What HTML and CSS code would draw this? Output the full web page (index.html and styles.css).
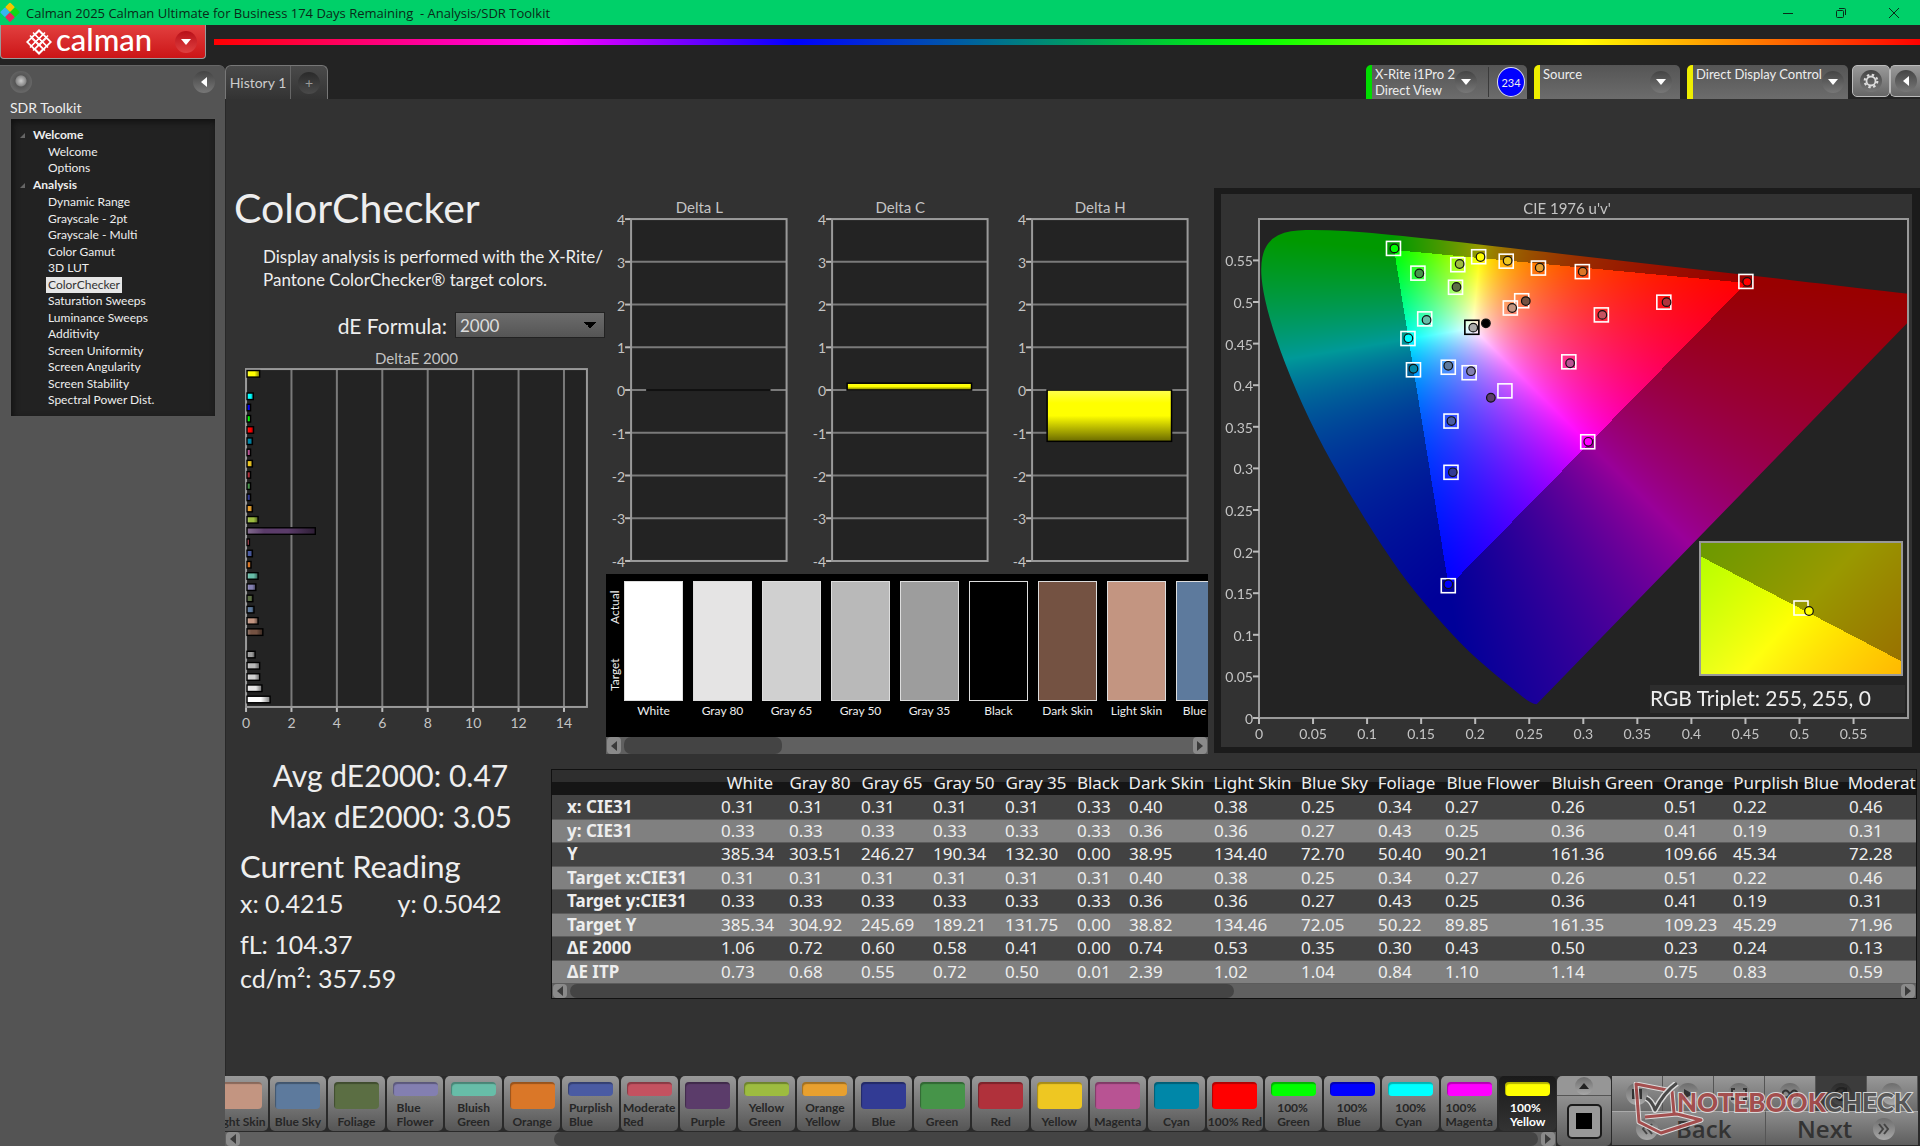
FILE: index.html
```html
<!DOCTYPE html>
<html lang="en">
<head>
    <meta charset="UTF-8">
    <meta name="viewport" content="width=device-width, initial-scale=1.0">
    <title>Calman 2025 - Analysis/SDR Toolkit</title>
    <link rel="stylesheet" href="styles.css">
</head>
<body>
    <header class="titlebar">
        <svg class="app-icon" viewBox="0 0 20 22" width="20" height="22">
            <rect x="6" y="2" width="7" height="7" rx="1" transform="rotate(45 10 6)" fill="#f5c400"/>
            <rect x="1" y="7" width="7" height="7" rx="1" transform="rotate(45 5 11)" fill="#37b6f0"/>
            <rect x="11" y="7" width="7" height="7" rx="1" transform="rotate(45 15 11)" fill="#0fd818"/>
            <rect x="6" y="12" width="7" height="7" rx="1" transform="rotate(45 10 16)" fill="#e8265c"/>
        </svg>
        <span class="window-title">Calman 2025 Calman Ultimate for Business 174 Days Remaining&nbsp; - Analysis/SDR Toolkit</span>
        <div class="window-buttons">
            <button title="Minimize"><svg viewBox="0 0 12 12" width="12" height="12"><path d="M1 6.500h10"/></svg></button>
            <button title="Restore"><svg viewBox="0 0 12 12" width="12" height="12"><rect x="1.500" y="3.500" width="7" height="7" rx="1"/><path d="M4 1.500h5.500a1 1 0 0 1 1 1V8"/></svg></button>
            <button title="Close"><svg viewBox="0 0 12 12" width="12" height="12"><path d="M1 1l10 10M11 1L1 11"/></svg></button>
        </div>
    </header>

    <div class="brandbar">
        <button class="brand" title="Calman menu">
            <svg viewBox="0 0 28 28" width="28" height="28">
                <path d="M14 1L27 14L14 27L1 14Z" fill="#fff"/>
                <g fill="#dc2226">
                    <path d="M14 4l3 3-3 3-3-3z"/>
                    <path d="M10 7.500l3 3-3 3-3-3z"/>
                    <path d="M18 7.500l3 3-3 3-3-3z"/>
                    <path d="M6.500 11l3 3-3 3-3-3z"/>
                    <path d="M14 11l3 3-3 3-3-3z"/>
                    <path d="M21.500 11l3 3-3 3-3-3z"/>
                    <path d="M10 14.500l3 3-3 3-3-3z"/>
                    <path d="M18 14.500l3 3-3 3-3-3z"/>
                    <path d="M14 18l3 3-3 3-3-3z"/>
                </g>
                <g fill="none" stroke="#fff" stroke-width="1.500"><path d="M8 4.500l15 15M5 7.500l15 15M20 4.500l-15 15M23 7.500l-15 15"/></g>
            </svg>
            <span class="wordmark">calman</span>
            <span class="round red"><svg viewBox="0 0 12 8" width="12" height="8"><path d="M1 1h10L6 7z" fill="#fff"/></svg></span>
        </button>
        <div class="rainbow"></div>
    </div>

    <div class="shell">
        <aside class="sidebar">
            <div class="sidebar-top">
                <span class="round knob"></span>
                <button class="round" title="Collapse"><svg viewBox="0 0 8 12" width="8" height="12"><path d="M7 1v10L1 6z" fill="#fff"/></svg></button>
            </div>
            <h2>SDR Toolkit</h2>
            <nav class="tree">
                <h3>Welcome</h3>
                <ul>
                    <li><a href="#">Welcome</a></li>
                    <li><a href="#">Options</a></li>
                </ul>
                <h3>Analysis</h3>
                <ul class="analysis">
                    <li><a href="#">Dynamic Range</a></li>
                    <li><a href="#">Grayscale - 2pt</a></li>
                    <li><a href="#">Grayscale - Multi</a></li>
                    <li><a href="#">Color Gamut</a></li>
                    <li><a href="#">3D LUT</a></li>
                    <li><a href="#" class="current">ColorChecker</a></li>
                    <li><a href="#">Saturation Sweeps</a></li>
                    <li><a href="#">Luminance Sweeps</a></li>
                    <li><a href="#">Additivity</a></li>
                    <li><a href="#">Screen Uniformity</a></li>
                    <li><a href="#">Screen Angularity</a></li>
                    <li><a href="#">Screen Stability</a></li>
                    <li><a href="#">Spectral Power Dist.</a></li>
                </ul>
            </nav>
        </aside>

        <main class="main">
            <div class="toolbar">
                <div class="tabs">
                    <button class="tab">History 1</button>
                    <button class="tab add" title="Add history"><span class="round dark">+</span></button>
                </div>
                <div class="devices">
                    <div class="device meter">
                        <span class="device-name">X-Rite i1Pro 2<br>Direct View</span>
                        <button class="round" title="Meter"><svg viewBox="0 0 12 8" width="12" height="8"><path d="M1 1h10L6 7z" fill="#fff"/></svg></button>
                        <span class="divider"></span>
                        <span class="count">234</span>
                    </div>
                    <div class="device source">
                        <span class="device-name">Source</span>
                        <button class="round" title="Source"><svg viewBox="0 0 12 8" width="12" height="8"><path d="M1 1h10L6 7z" fill="#fff"/></svg></button>
                    </div>
                    <div class="device display">
                        <span class="device-name">Direct Display Control</span>
                        <button class="round" title="Display"><svg viewBox="0 0 12 8" width="12" height="8"><path d="M1 1h10L6 7z" fill="#fff"/></svg></button>
                    </div>
                    <button class="square" title="Settings"><span class="round">
                        <svg viewBox="0 0 20 20" width="18" height="18" fill="none" stroke="#ddd"><circle cx="10" cy="10" r="5" stroke-width="2"/><circle cx="10" cy="10" r="7" stroke-width="2.400" stroke-dasharray="2.700 2.800"/></svg>
                    </span></button>
                    <button class="square last" title="Hide"><span class="round"><svg viewBox="0 0 8 12" width="8" height="12"><path d="M7 1v10L1 6z" fill="#fff"/></svg></span></button>
                </div>
            </div>

            <div class="workspace">
                <div class="upper">
                    <section class="intro">
                        <h1>ColorChecker</h1>
                        <p>Display analysis is performed with the X-Rite/<br>Pantone ColorChecker® target colors.</p>
                        <div class="formula">
                            <label for="formula">dE Formula:</label>
                            <select id="formula"><option>2000</option></select>
                        </div>
                        <svg id="deltaE" viewBox="0 0 371 385"></svg>
                    </section>

                    <section class="deltas">
                        <div class="delta-charts">
                            <svg class="delta" viewBox="0 0 200 374" data-title="Delta L" data-value="0"></svg>
                            <svg class="delta" viewBox="0 0 200 374" data-title="Delta C" data-value="0.16"></svg>
                            <svg class="delta" viewBox="0 0 200 374" data-title="Delta H" data-value="-1.2"></svg>
                        </div>
                        <div class="compare">
                            <div class="compare-side"><span>Target</span><span>Actual</span></div>
                            <div id="compare" class="compare-list"></div>
                        </div>
                        <div class="scrollbar tall">
                            <button title="Scroll left"><svg viewBox="0 0 6 10" width="6" height="10"><path d="M6 0v10L0 5z"/></svg></button>
                            <div class="track"><div class="thumb first"></div></div>
                            <button title="Scroll right"><svg viewBox="0 0 6 10" width="6" height="10"><path d="M0 0v10l6-5z"/></svg></button>
                        </div>
                    </section>

                    <section class="cie">
                        <canvas id="cieFill" width="691" height="553"></canvas>
                        <svg id="cie" viewBox="0 0 691 553"></svg>
                    </section>
                </div>

                <div class="lower">
                    <section class="stats">
                        <p class="big">Avg dE2000: 0.47</p>
                        <p class="big">Max dE2000: 3.05</p>
                        <h2>Current Reading</h2>
                        <p class="pair"><span>x: 0.4215</span><span>y: 0.5042</span></p>
                        <p>fL: 104.37</p>
                        <p>cd/m²: 357.59</p>
                    </section>
                    <section class="results">
                        <div class="table-wrap"><table id="results"></table></div>
                        <div class="scrollbar">
                            <button title="Scroll left"><svg viewBox="0 0 6 10" width="6" height="10"><path d="M6 0v10L0 5z"/></svg></button>
                            <div class="track"><div class="thumb half"></div></div>
                            <button title="Scroll right"><svg viewBox="0 0 6 10" width="6" height="10"><path d="M0 0v10l6-5z"/></svg></button>
                        </div>
                    </section>
                </div>
            </div>

            <footer class="bottombar">
                <div class="patterns">
                    <div id="patches" class="patches"></div>
                    <div class="scrollbar">
                        <button title="Scroll left"><svg viewBox="0 0 6 10" width="6" height="10"><path d="M6 0v10L0 5z"/></svg></button>
                        <div class="track end"><div class="thumb rest"></div></div>
                        <button title="Scroll right"><svg viewBox="0 0 6 10" width="6" height="10"><path d="M0 0v10l6-5z"/></svg></button>
                    </div>
                </div>
                <div class="window-pick">
                    <button class="up" title="Up"><span class="round grey"><svg viewBox="0 0 10 6" width="10" height="6"><path d="M0 6L5 0l5 6z" fill="#222"/></svg></span></button>
                    <button class="stop" title="Pattern window"><span></span></button>
                </div>
                <div class="transport">
                    <div class="steps">
                        <button title="Stop"><span class="round grey"><svg viewBox="0 0 12 12" width="12" height="12"><path d="M1 1h10v10H1z" fill="#333"/></svg></span></button>
                        <button title="Play"><span class="round grey"><svg viewBox="0 0 12 12" width="12" height="12"><path d="M2 1l9 5-9 5z" fill="#333"/></svg></span></button>
                        <button title="Read range"><span class="round grey"><svg viewBox="0 0 16 12" width="16" height="12"><path d="M4 1H1v10h3M12 1h3v10h-3M5 6h1M8 6h1M11 6h0.500" fill="none" stroke="#333" stroke-width="2"/></svg></span></button>
                        <button title="Continuous"><span class="round grey"><svg viewBox="0 0 16 10" width="16" height="10"><path d="M8 5C6 2 5 1.500 4 1.500a3.500 3.500 0 0 0 0 7C5 8.500 6 8 8 5s3-3.500 4-3.500a3.500 3.500 0 0 1 0 7C11 8.500 10 8 8 5z" fill="none" stroke="#333" stroke-width="2"/></svg></span></button>
                        <button class="pressed" title="Refresh"><span class="round dark"><svg viewBox="0 0 14 14" width="14" height="14"><path d="M12 3A6 6 0 1 0 12 11" fill="none" stroke="#222" stroke-width="2.500"/><path d="M13 0v6H7z" fill="#222"/></svg></span></button>
                        <button title="Level"><span class="round grey"><svg viewBox="0 0 12 12" width="12" height="12"><path d="M2 6h8" stroke="#555" stroke-width="2"/></svg></span></button>
                    </div>
                    <div class="nav-buttons">
                        <button class="back"><span class="round grey"><svg viewBox="0 0 12 12" width="12" height="12"><path d="M6 1L2 6l4 5M11 1L7 6l4 5" fill="none" stroke="#444" stroke-width="2"/></svg></span>Back</button>
                        <button class="next">Next<span class="round grey"><svg viewBox="0 0 12 12" width="12" height="12"><path d="M1 1l4 5-4 5M6 1l4 5-4 5" fill="none" stroke="#444" stroke-width="2"/></svg></span></button>
                    </div>
                    <svg class="watermark" viewBox="0 0 288 54">
                        <g fill="none" stroke-linejoin="round">
                            <path d="M40 9L4 2l3 38 22 11 40-13-24-6-32 3M40 9l2 22" stroke="#e6e6e6" stroke-width="5"/>
                            <path d="M40 9L4 2l3 38 22 11 40-13-24-6-32 3M40 9l2 22" stroke="#a84a4a" stroke-width="3"/>
                            <path d="M14 16c5 2 7 6 9 12 6-12 12-20 22-27" stroke="#e6e6e6" stroke-width="6"/>
                            <path d="M14 16c5 2 7 6 9 12 6-12 12-20 22-27" stroke="#444" stroke-width="3"/>
                        </g>
                        <text x="45" y="30"><tspan class="wm-red">NOTEBOOK</tspan><tspan class="wm-dark">CHECK</tspan></text>
                    </svg>
                </div>
            </footer>
        </main>
    </div>

    <script src="script.js"></script>
</body>
</html>
```
FILE: styles.css
```css
* {
    box-sizing: border-box;
    margin: 0;
    padding: 0;
}

body {
    display: flex;
    flex-direction: column;
    height: 100vh;
    overflow: hidden;
    background: #232323;
    color: #eee;
    font-family: Lato, "Open Sans", sans-serif;
    font-size: 13px;
}

button {
    border: 0;
    background: none;
    color: inherit;
    font: inherit;
    cursor: pointer;
}

svg {
    display: block;
}

ul {
    list-style: none;
}

/* Title bar */
.titlebar {
    display: flex;
    align-items: center;
    flex: none;
    height: 25px;
    background: #00d069;
    color: #0a2a18;
    font-family: "Open Sans", sans-serif;
    font-size: 13px;
}

.app-icon {
    margin-right: 6px;
}

.window-buttons {
    display: flex;
    margin-left: auto;
}

.window-buttons button {
    display: flex;
    align-items: center;
    justify-content: center;
    width: 53px;
    height: 25px;
}

.window-buttons svg {
    fill: none;
    stroke: #0a2a18;
}

/* Logo and colour line */
.brandbar {
    display: flex;
    flex: none;
    height: 40px;
    gap: 8px;
}

.brand {
    display: flex;
    align-items: center;
    width: 206px;
    height: 34px;
    padding-left: 24px;
    border: 1px solid #999;
    border-top: 0;
    border-radius: 0 0 4px 4px;
    background: linear-gradient(#e2403f, #cc1517);
    color: #fff;
}

.wordmark {
    flex: 1;
    height: 34px;
    padding-left: 3px;
    font-size: 31px;
    font-weight: 500;
    line-height: 28px;
    text-align: left;
}

.rainbow {
    flex: 1;
    height: 6px;
    margin-top: 14px;
    background: linear-gradient(90deg, #f00, #f0f 20%, #00f 34%, #0f0 61%, #ff0 80%, #f00);
}

.round {
    display: flex;
    align-items: center;
    justify-content: center;
    flex: none;
    width: 22px;
    height: 22px;
    border-radius: 50%;
    background: linear-gradient(#444, #777);
}

.round.red {
    margin-right: 8px;
    background: linear-gradient(#b80f18, #e04040);
}

.round.dark {
    background: linear-gradient(#2a2a2a, #4a4a4a);
    color: #999;
}

.round.grey {
    background: linear-gradient(#6d6d6d, #a8a8a8);
}

.round.knob {
    background: radial-gradient(circle at 50% 45%, #ccc 0, #888 5px, #555 6px, #666 11px);
}

.shell {
    display: flex;
    flex: 1;
    min-height: 0;
}

/* Sidebar */
.sidebar {
    flex: none;
    width: 225px;
    padding: 5px 10px;
    border-top: 1px solid #666;
    border-radius: 0 6px 0 0;
    background: #545454;
}

.sidebar-top {
    display: flex;
    justify-content: space-between;
}

.sidebar h2 {
    padding-top: 6px;
    font-size: 14px;
    font-weight: 400;
    line-height: 18px;
}

.tree {
    width: 206px;
    margin-top: 1px;
    padding: 7px 10px 8px 37px;
    border: 1px solid #555;
    background: #222;
    box-shadow: inset 2px 3px 6px #111;
    font-size: 12px;
}

.tree h3 {
    position: relative;
    margin-left: -15px;
    font-size: 12px;
    line-height: 18px;
}

.tree h3::before {
    position: absolute;
    left: -13px;
    top: 7px;
    border-left: 5px solid transparent;
    border-bottom: 5px solid #666;
    content: "";
}

.tree li {
    line-height: 16px;
}

.tree a {
    padding: 0 2px;
    margin-left: -2px;
    color: inherit;
    text-decoration: none;
}

.tree .analysis {
    display: grid;
    align-content: space-between;
    min-height: 214px;
}

.tree .current {
    display: inline-block;
    background: #e6e6e6;
    color: #333;
}

/* Tabs and devices */
.main {
    display: flex;
    flex: 1;
    flex-direction: column;
    min-width: 0;
}

.toolbar {
    display: flex;
    justify-content: space-between;
    flex: none;
    height: 34px;
}

.tabs {
    display: flex;
    border: 1px solid #777;
    border-bottom: 0;
    border-radius: 6px 6px 0 0;
    background: linear-gradient(#4a4a4a, #333);
}

.tab {
    width: 64px;
    color: #ccc;
    font-size: 14px;
}

.tab.add {
    display: flex;
    align-items: center;
    justify-content: center;
    width: 37px;
    border-left: 1px solid #666;
}

.devices {
    display: flex;
    gap: 7px;
}

.device {
    display: flex;
    align-items: center;
    height: 34px;
    padding-right: 8px;
    border-left: 6px solid #ee0;
    border-radius: 5px 5px 0 0;
    background: linear-gradient(#555, #6c6c6c);
}

.device-name {
    flex: 1;
    align-self: flex-start;
    padding: 1px 0 0 3px;
    line-height: 16px;
    white-space: nowrap;
}

.meter {
    width: 161px;
    padding-right: 2px;
    border-color: #0d0;
}

.source {
    width: 146px;
}

.display {
    width: 161px;
}

.divider {
    width: 1px;
    height: 30px;
    margin: 0 8px 0 11px;
    background: #3a3a3a;
}

.count {
    display: flex;
    align-items: center;
    justify-content: center;
    width: 30px;
    height: 30px;
    border: 1px solid #dde;
    border-radius: 50%;
    background: #00f;
    font-size: 11px;
}

.square {
    display: flex;
    align-items: center;
    justify-content: center;
    width: 38px;
    height: 32px;
    margin-left: -3px;
    border: 1px solid #bbb;
    border-radius: 5px;
    background: linear-gradient(#999, #666);
}

.square.last {
    width: 30px;
    margin-left: -7px;
    border-right: 0;
    border-radius: 5px 0 0 5px;
}

/* Workspace */
.workspace {
    flex: 1;
    min-height: 0;
    padding: 89px 0 0 8px;
    border-left: 1px solid #282828;
    background: #323232;
}

.upper {
    display: grid;
    grid-template-columns: 372fr 608fr 706fr;
    align-items: start;
}

.intro h1 {
    margin-top: -2px;
    font-size: 41px;
    font-weight: 400;
    line-height: 44px;
}

.intro p {
    padding: 15px 0 0 29px;
    font-size: 17px;
    line-height: 23px;
    white-space: nowrap;
}

.formula {
    display: flex;
    align-items: center;
    justify-content: flex-end;
    gap: 8px;
    padding: 21px 1px 9px 0;
    font-size: 21px;
}

/* the arrow is made of two half squares */
.formula select {
    width: 150px;
    height: 26px;
    padding: 0 4px;
    border: 1px solid #222;
    appearance: none;
    background:
        linear-gradient(45deg, transparent 50%, #000 50%) right 14px center / 6px 6px no-repeat,
        linear-gradient(-45deg, transparent 50%, #000 50%) right 8px center / 6px 6px no-repeat,
        linear-gradient(#6c6c6c, #555);
    color: #ddd;
    font: 17px Lato, sans-serif;
}

.deltas {
    min-width: 0;
    padding: 11px 6px 0 0;
}

.delta-charts {
    display: grid;
    grid-template-columns: repeat(3, 1fr);
}

.compare {
    display: flex;
    height: 163px;
    padding-top: 7px;
    overflow: hidden;
    background: #000;
}

.compare-side {
    display: flex;
    justify-content: center;
    flex: none;
    gap: 34px;
    width: 18px;
    height: 120px;
    font-size: 12px;
    line-height: 18px;
    writing-mode: vertical-rl;
    transform: rotate(180deg);
}

.compare-list {
    display: flex;
    gap: 10px;
}

.compare-item {
    flex: none;
    width: 59px;
    font-size: 12px;
    line-height: 20px;
    text-align: center;
    white-space: nowrap;
}

.compare-color {
    height: 120px;
    border: 1px solid #ddd;
}

/* Scrollbars */
.scrollbar {
    display: flex;
    align-items: center;
    height: 14px;
    padding: 0 1px;
    background: #606060;
}

.scrollbar.tall {
    height: 17px;
}

.scrollbar button {
    display: flex;
    align-items: center;
    justify-content: center;
    width: 14px;
    height: 100%;
    border-radius: 4px;
    background: #8a8a8a;
}

.scrollbar path {
    fill: #3a3a3a;
}

.track {
    flex: 1;
    height: 100%;
    margin: 0 3px;
}

.track.end {
    display: flex;
    justify-content: flex-end;
}

.thumb {
    height: 100%;
    border-radius: 7px;
    background: #444;
}

.thumb.first {
    width: 28%;
}

.thumb.half {
    width: 50%;
}

.thumb.rest {
    width: 76%;
}

/* Chromaticity diagram */
.cie {
    display: grid;
    border: 6px solid #1b1b1b;
    border-left-width: 7px;
    border-right-width: 8px;
}

.cie > * {
    grid-area: 1 / 1;
    width: 100%;
}

.label {
    fill: #c4c4c4;
    font-size: 14px;
}

.caption {
    fill: #c4c4c4;
    font-size: 15px;
    text-anchor: middle;
}

.label.mid {
    text-anchor: middle;
}

.label.end {
    text-anchor: end;
}

.plot {
    fill: #232323;
}

.frame {
    fill: none;
    stroke: #999;
    stroke-width: 2;
}

.grid-line {
    stroke: #7a7a7a;
    stroke-width: 2;
}

.tick {
    stroke: #bbb;
    stroke-width: 2;
}

.triplet {
    fill: #eee;
    font-size: 21px;
}

/* Readings */
.lower {
    display: grid;
    grid-template-columns: 317fr 1369fr;
    margin-top: 15px;
}

.stats {
    margin-top: -14px;
    padding-left: 6px;
    font-size: 25px;
    line-height: 34px;
}

.stats .big {
    margin-left: -6px;
    padding-right: 4px;
    font-size: 30px;
    line-height: 41px;
    text-align: center;
}

.stats h2 {
    margin-top: 10px;
    font-size: 31px;
    font-weight: 400;
    line-height: 38px;
}

.stats .pair {
    display: flex;
    gap: 54px;
    margin: 1px 0 7px;
}

.results {
    min-width: 0;
    margin-right: 3px;
    border: 1px solid #111;
}

.table-wrap {
    overflow: hidden;
}

#results {
    width: 1412px;
    border-collapse: collapse;
    table-layout: fixed;
    font-family: "Noto Sans", "Open Sans", sans-serif;
    font-size: 17px;
}

#results tr {
    height: 24px;
}

#results thead tr {
    height: 25px;
    background: linear-gradient(#2e2e2e 50%, #151515 50%);
}

#results th,
#results td {
    overflow: hidden;
    padding: 0 0 0 5px;
    line-height: 22px;
    text-align: left;
    white-space: nowrap;
}

#results thead th {
    padding: 0;
    font-weight: 400;
    text-align: center;
}

#results tbody tr {
    border-bottom: 1px solid #5c5c5c;
    background: #424242;
}

#results tbody tr:nth-child(even) {
    height: 23px;
    background: #808080;
}

#results tbody th {
    padding-left: 15px;
}

/* Bottom bar */
.bottombar {
    display: flex;
    flex: none;
    height: 70px;
    background: #2a2a2a;
}

.patterns {
    flex: 1;
    min-width: 0;
}

.patches {
    display: flex;
    justify-content: flex-end;
    gap: 2px;
    height: 55px;
    margin-bottom: 1px;
    overflow: hidden;
}

.patch {
    display: flex;
    flex: 0 0 4.25%;
    flex-direction: column;
    align-items: center;
    justify-content: space-between;
    padding: 6px 0 2px;
    border-radius: 5px;
    background: linear-gradient(#999, #555);
    color: #262626;
    font-size: 12px;
    font-weight: 700;
    line-height: 14px;
    text-align: left;
    white-space: nowrap;
}

.patch i {
    width: 45px;
    height: 27px;
    border-radius: 4px;
    box-shadow: inset 1px 2px 1px rgba(0, 0, 0, 0.3);
}

.patch.two i {
    height: 14px;
}

.patch.active {
    background: linear-gradient(#1a1a1a, #333);
    color: #fff;
}

.window-pick {
    display: flex;
    flex: none;
    flex-direction: column;
    width: 55px;
    padding-left: 1px;
}

.up {
    display: flex;
    align-items: center;
    justify-content: center;
    height: 20px;
    border-bottom: 1px solid #555;
    border-radius: 5px 5px 0 0;
    background: #969696;
}

.up .round {
    width: 18px;
    height: 18px;
}

.stop {
    display: flex;
    align-items: center;
    justify-content: center;
    flex: 1;
    border-radius: 0 0 5px 5px;
    background: linear-gradient(#909090, #5a5a5a);
}

.stop span {
    width: 35px;
    height: 35px;
    border: 2px solid #1a1a1a;
    border-radius: 5px;
    background: linear-gradient(#000, #000) center / 16px 16px no-repeat, #999;
}

.transport {
    position: relative;
    flex: none;
    width: 309px;
    padding: 0 2px 0 1px;
}

.steps {
    display: grid;
    grid-template-columns: repeat(6, 1fr);
    height: 35px;
}

.steps button {
    display: flex;
    align-items: center;
    justify-content: center;
    border-right: 1px solid #555;
    background: linear-gradient(#999, #6a6a6a);
}

.steps .pressed {
    background: #3c3c3c;
}

.nav-buttons {
    display: grid;
    grid-template-columns: 1fr 1fr;
    height: 34px;
}

.nav-buttons button {
    display: flex;
    align-items: center;
    border-top: 1px solid #aaa;
    background: linear-gradient(#8c8c8c, #5e5e5e);
    color: #333;
    font: 600 24px "Open Sans", sans-serif;
}

.back {
    gap: 18px;
    padding-left: 24px;
}

.next {
    gap: 21px;
    padding-left: 31px;
    border-left: 1px solid #555;
}

/* Watermark lies over the transport buttons */
.watermark {
    position: absolute;
    right: 0;
    top: 6px;
    width: 288px;
    opacity: 0.9;
}

.watermark text {
    font: 900 26px Lato, sans-serif;
    paint-order: stroke;
    stroke: #e2e2e2;
    stroke-width: 2;
}

.wm-red {
    fill: #a84a4a;
}

.wm-dark {
    fill: #555;
}
```
FILE: script.js
```js
const NS = 'http://www.w3.org/2000/svg';

function add(parent, tag, attrs, text) {
    const el = document.createElementNS(NS, tag);
    for (const key in attrs) el.setAttribute(key, attrs[key]);
    if (text !== undefined) el.textContent = text;
    parent.appendChild(el);
    return el;
}

function line(parent, x1, y1, x2, y2, cls) {
    add(parent, 'line', { x1, y1, x2, y2, class: cls });
}

// shared by the bars, the comparison strip and the pattern buttons
const patches = [
    ['White', '#ffffff', 1.06],
    ['Gray 80', '#e5e4e4', 0.7],
    ['Gray 65', '#d0d0d0', 0.6],
    ['Gray 50', '#b9b9b9', 0.6],
    ['Gray 35', '#9d9d9d', 0.4],
    ['Black', '#000000', 0],
    ['Dark Skin', '#745242', 0.74],
    ['Light Skin', '#c39581', 0.53],
    ['Blue Sky', '#5d7a9d', 0.35],
    ['Foliage', '#5b6e43', 0.3],
    ['Blue Flower', '#837fb1', 0.43],
    ['Bluish Green', '#67bda8', 0.53],
    ['Orange', '#da7728', 0.22],
    ['Purplish Blue', '#4a5ba3', 0.28],
    ['Moderate Red', '#c45260', 0.15],
    ['Purple', '#5b3c6a', 3.05],
    ['Yellow Green', '#9dbc40', 0.53],
    ['Orange Yellow', '#e8a02f', 0.28],
    ['Blue', '#323b94', 0.2],
    ['Green', '#469449', 0.2],
    ['Red', '#b0313b', 0.2],
    ['Yellow', '#eec722', 0.28],
    ['Magenta', '#b85393', 0.2],
    ['Cyan', '#0087a8', 0.28],
    ['100% Red', '#ff0000', 0.33],
    ['100% Green', '#00ff00', 0.2],
    ['100% Blue', '#0000ff', 0.2],
    ['100% Cyan', '#00ffff', 0.32],
    ['100% Magenta', '#ff00ff', 0],
    ['100% Yellow', '#ffff00', 0.6]
];

function drawDeltaE() {
    const svg = document.getElementById('deltaE');
    const left = 12, right = 352, top = 22, bottom = 359, unit = 22.65;
    const defs = add(svg, 'defs', {});
    add(svg, 'text', { x: 182, y: 17, class: 'caption' }, 'DeltaE 2000');
    add(svg, 'rect', { x: left, y: top, width: right - left, height: bottom - top, class: 'plot' });
    for (let v = 0; v <= 14; v += 2) {
        const x = left + v * unit;
        line(svg, x, top, x, bottom, 'grid-line');
        line(svg, x, bottom, x, bottom + 5, 'tick');
        add(svg, 'text', { x, y: bottom + 21, class: 'label mid' }, v);
    }
    add(svg, 'rect', { x: left, y: top, width: right - left, height: bottom - top, class: 'frame' });
    patches.slice().reverse().forEach(function (p, i) {
        if (!p[2]) return;
        const grad = add(defs, 'linearGradient', { id: 'bar' + i });
        add(grad, 'stop', { offset: 0, 'stop-color': 'color-mix(in srgb, ' + p[1] + ' 75%, white)' });
        add(grad, 'stop', { offset: 0.25, 'stop-color': p[1] });
        add(grad, 'stop', { offset: 0.6, 'stop-color': p[1] });
        add(grad, 'stop', { offset: 1, 'stop-color': 'color-mix(in srgb, ' + p[1] + ' 50%, black)' });
        add(svg, 'rect', {
            x: left + 1, y: top + 1.5 + i * 11.2, width: p[2] * unit - 1, height: 6.5,
            fill: 'url(#bar' + i + ')', stroke: '#000', 'stroke-width': 1.4
        });
    });
}

function drawDelta(svg, n) {
    const value = Number(svg.dataset.value);
    const left = 25, right = 180, top = 20, unit = 42.6;
    const zero = top + unit * 4;
    add(svg, 'text', { x: 93, y: 14, class: 'caption' }, svg.dataset.title);
    add(svg, 'rect', { x: left, y: top, width: right - left, height: unit * 8, class: 'plot' });
    for (let v = 4; v >= -4; v--) {
        const y = zero - v * unit;
        line(svg, left, y, right, y, 'grid-line');
        line(svg, left - 6, y, left, y, 'tick');
        add(svg, 'text', { x: left - 6, y: y + 6, class: 'label end' }, v);
    }
    add(svg, 'rect', { x: left, y: top, width: right - left, height: unit * 8, class: 'frame' });
    if (value === 0) {
        add(svg, 'rect', { x: left + 15, y: zero - 1, width: 124, height: 2, fill: '#111' });
        return;
    }
    const grad = add(svg, 'linearGradient', { id: 'delta' + n, x2: 0, y2: 1 });
    add(grad, 'stop', { offset: 0, 'stop-color': '#ffff50' });
    add(grad, 'stop', { offset: 0.25, 'stop-color': '#ffff00' });
    add(grad, 'stop', { offset: 0.5, 'stop-color': '#ffff00' });
    add(grad, 'stop', { offset: 1, 'stop-color': '#6a6a00' });
    add(svg, 'rect', {
        x: left + 15, y: zero - Math.max(value, 0) * unit, width: 124, height: Math.abs(value) * unit,
        fill: 'url(#delta' + n + ')', stroke: '#000', 'stroke-width': 1.5
    });
}

// CIE 1931 xy of the spectral locus
const locus = [
    [.1741, .005], [.1714, .0051], [.1644, .0109], [.1566, .0177], [.144, .0297], [.1241, .0578],
    [.1096, .0868], [.0913, .1327], [.0687, .2007], [.0454, .295], [.0235, .4127], [.0082, .5384],
    [.0039, .6548], [.0139, .7502], [.0389, .812], [.0743, .8338], [.1142, .8262], [.1547, .8059],
    [.2296, .7543], [.3016, .6923], [.3731, .6245], [.4441, .5547], [.5125, .4866], [.5752, .4242],
    [.627, .3725], [.6658, .334], [.6915, .3083], [.719, .2809], [.7347, .2653]
];

const cie = { x: 38, y: 524, w: 649, h: 499, sx: 1081, sy: 832 };
const inset = { x: 479, y: 348, w: 202, h: 133 };

// xy to linear RGB at full brightness, darker outside the gamut
function xyColor(x, y) {
    const X = x / y, Z = (1 - x - y) / y;
    const rgb = [
        3.2406 * X - 1.5372 - 0.4986 * Z,
        -0.9689 * X + 1.8758 + 0.0415 * Z,
        0.0557 * X - 0.204 + 1.057 * Z
    ];
    const dim = Math.min(...rgb) < 0 ? 0.6 : 1;
    const max = Math.max(...rgb);
    return rgb.map(c => 255 * dim * Math.max(c, 0) / max);
}

function paint(w, h, toXy) {
    const canvas = document.createElement('canvas');
    canvas.width = w;
    canvas.height = h;
    const ctx = canvas.getContext('2d');
    const img = ctx.createImageData(w, h);
    for (let j = 0; j < h; j++) {
        for (let i = 0; i < w; i++) {
            const xy = toXy(i, j);
            const c = xyColor(xy[0], xy[1]);
            img.data.set([c[0], c[1], c[2], 255], (j * w + i) * 4);
        }
    }
    ctx.putImageData(img, 0, 0);
    return canvas;
}

function drawCieFill() {
    const ctx = document.getElementById('cieFill').getContext('2d');
    ctx.fillStyle = '#323232';
    ctx.fillRect(0, 0, 691, 553);
    ctx.fillStyle = '#232323';
    ctx.fillRect(cie.x, cie.y - cie.h, cie.w, cie.h);

    const pts = locus.map(function (p) {
        const d = -2 * p[0] + 12 * p[1] + 3;
        return [cie.x + cie.sx * 4 * p[0] / d, cie.y - cie.sy * 9 * p[1] / d];
    });
    ctx.save();
    ctx.beginPath();
    ctx.rect(cie.x, cie.y - cie.h, cie.w, cie.h);
    ctx.clip();
    ctx.beginPath();
    ctx.moveTo(pts[0][0], pts[0][1]);
    for (let i = 1; i < pts.length - 1; i++) {
        ctx.quadraticCurveTo(pts[i][0], pts[i][1], (pts[i][0] + pts[i + 1][0]) / 2, (pts[i][1] + pts[i + 1][1]) / 2);
    }
    ctx.lineTo(pts[pts.length - 1][0], pts[pts.length - 1][1]);
    ctx.closePath();
    ctx.clip();
    ctx.drawImage(paint(cie.w, cie.h, function (i, j) {
        const u = (i + 0.5) / cie.sx, v = (cie.h - j - 0.5) / cie.sy;
        const d = 6 * u - 16 * v + 12;
        return [9 * u / d, 4 * v / d];
    }), cie.x, cie.y - cie.h);
    ctx.restore();

    // magnified area round the current patch
    ctx.drawImage(paint(inset.w, inset.h, function (i, j) {
        return [0.4193 + (i - inset.w / 2) / 4150, 0.5053 - (j - inset.h / 2) / 2730];
    }), inset.x, inset.y);
}

// target u'v', measured u'v', colour
const points = [
    [.1244, .5644, .1253, .5644, '#00ff00'],
    [.2032, .5544, .2049, .5540, '#ffff00'],
    [.1839, .5448, .1856, .5457, '#9dbc40'],
    [.2287, .5491, .2300, .5496, '#eec722'],
    [.2585, .5408, .2597, .5413, '#e8a02f'],
    [.2991, .5365, .2995, .5365, '#da7728'],
    [.4504, .5247, .4516, .5242, '#ff0000'],
    [.1470, .5347, .1483, .5343, '#469449'],
    [.1818, .5177, .1827, .5181, '#5b6e43'],
    [.2430, .5015, .2468, .5011, '#745242'],
    [.2325, .4928, .2342, .4928, '#c39581'],
    [.3745, .4998, .3770, .4998, '#b0313b'],
    [.3167, .4845, .3176, .4845, '#c45260'],
    [.1533, .4797, .1550, .4784, '#67bda8'],
    [.1378, .4561, .1382, .4565, '#00ffff'],
    [.1429, .4185, .1429, .4198, '#0087a8'],
    [.1751, .4216, .1751, .4233, '#5d7a9d'],
    [.1944, .4150, .1961, .4168, '#837fb1'],
    [.2866, .4281, .2878, .4264, '#b85393'],
    [.2275, .3932, .2145, .3849, '#5b3c6a'],
    [.1776, .3569, .1780, .3569, '#4a5ba3'],
    [.1776, .2953, .1793, .2953, '#323b94'],
    [.3041, .3320, .3046, .3320, '#ff00ff'],
    [.1751, .1590, .1751, .1608, '#0000ff'],
    [.1969, .4696, .1982, .4692, '#aaaaaa']
];

function drawCie() {
    const svg = document.getElementById('cie');
    const px = u => cie.x + u * cie.sx;
    const py = v => cie.y - v * cie.sy;
    const square = (x, y, stroke) => add(svg, 'rect', { x: x - 7, y: y - 7, width: 14, height: 14, fill: 'none', stroke, 'stroke-width': 1.6 });
    const dot = (x, y, fill) => add(svg, 'circle', { cx: x, cy: y, r: 4.3, fill, stroke: '#111', 'stroke-width': 1.2 });

    add(svg, 'text', { x: 346, y: 20, class: 'caption' }, "CIE 1976 u'v'");
    add(svg, 'rect', { x: cie.x, y: cie.y - cie.h, width: cie.w, height: cie.h, class: 'frame' });
    for (let i = 0; i < 12; i++) {
        const v = Number((i * 0.05).toFixed(2));
        line(svg, px(v), cie.y, px(v), cie.y + 6, 'tick');
        line(svg, cie.x - 6, py(v), cie.x, py(v), 'tick');
        add(svg, 'text', { x: px(v), y: 545, class: 'label mid' }, v);
        add(svg, 'text', { x: 32, y: py(v) + 6, class: 'label end' }, v);
    }
    points.forEach(function (p) {
        square(px(p[0]), py(p[1]), p[4] === '#aaaaaa' ? '#000' : '#fff');
        dot(px(p[2]), py(p[3]), p[4]);
    });
    dot(px(0.2099), py(0.4744), '#000');

    add(svg, 'rect', { x: inset.x, y: inset.y, width: inset.w, height: inset.h, class: 'frame' });
    square(580, 414, '#fff');
    dot(588, 417, '#ff0');

    add(svg, 'rect', { x: 429, y: 491, width: 255, height: 28, fill: '#2d2d2d' });
    add(svg, 'text', { x: 429, y: 512, class: 'triplet' }, 'RGB Triplet: 255, 255, 0');
}

function fillCompare() {
    const list = document.getElementById('compare');
    patches.slice(0, 9).forEach(function (p) {
        list.insertAdjacentHTML('beforeend',
            `<div class="compare-item"><div class="compare-color" style="background:${p[1]}"></div>${p[0]}</div>`);
    });
}

function fillPatches() {
    const list = document.getElementById('patches');
    patches.slice(7).forEach(function (p) {
        const two = p[0].includes(' ') && !['Light Skin', 'Blue Sky', '100% Red'].includes(p[0]);
        const active = p[0] === '100% Yellow';
        list.insertAdjacentHTML('beforeend',
            `<button class="patch${two ? ' two' : ''}${active ? ' active' : ''}"><i style="background:${p[1]}"></i><span>${two ? p[0].replace(' ', '<br>') : p[0]}</span></button>`);
    });
}

const widths = [164, 68, 72, 72, 72, 72, 52, 85, 87, 77, 67, 106, 113, 69, 116, 120];
const columns = ['White', 'Gray 80', 'Gray 65', 'Gray 50', 'Gray 35', 'Black', 'Dark Skin', 'Light Skin', 'Blue Sky',
    'Foliage', 'Blue Flower', 'Bluish Green', 'Orange', 'Purplish Blue', 'Moderate Red'];
const rows = {
    'x: CIE31': '0.31 0.31 0.31 0.31 0.31 0.33 0.40 0.38 0.25 0.34 0.27 0.26 0.51 0.22 0.46',
    'y: CIE31': '0.33 0.33 0.33 0.33 0.33 0.33 0.36 0.36 0.27 0.43 0.25 0.36 0.41 0.19 0.31',
    'Y': '385.34 303.51 246.27 190.34 132.30 0.00 38.95 134.40 72.70 50.40 90.21 161.36 109.66 45.34 72.28',
    'Target x:CIE31': '0.31 0.31 0.31 0.31 0.31 0.31 0.40 0.38 0.25 0.34 0.27 0.26 0.51 0.22 0.46',
    'Target y:CIE31': '0.33 0.33 0.33 0.33 0.33 0.33 0.36 0.36 0.27 0.43 0.25 0.36 0.41 0.19 0.31',
    'Target Y': '385.34 304.92 245.69 189.21 131.75 0.00 38.82 134.46 72.05 50.22 89.85 161.35 109.23 45.29 71.96',
    'ΔE 2000': '1.06 0.72 0.60 0.58 0.41 0.00 0.74 0.53 0.35 0.30 0.43 0.50 0.23 0.24 0.13',
    'ΔE ITP': '0.73 0.68 0.55 0.72 0.50 0.01 2.39 1.02 1.04 0.84 1.10 1.14 0.75 0.83 0.59'
};

function fillTable() {
    let html = '<colgroup>' + widths.map(w => `<col style="width:${w}px">`).join('') + '</colgroup>';
    html += '<thead><tr><td></td>' + columns.map(c => `<th scope="col">${c}</th>`).join('') + '</tr></thead><tbody>';
    for (const name in rows) {
        html += `<tr><th scope="row">${name}</th>` + rows[name].split(' ').map(v => `<td>${v}</td>`).join('') + '</tr>';
    }
    document.getElementById('results').innerHTML = html + '</tbody>';
}

drawDeltaE();
document.querySelectorAll('.delta').forEach(drawDelta);
drawCieFill();
drawCie();
fillCompare();
fillPatches();
fillTable();
```
